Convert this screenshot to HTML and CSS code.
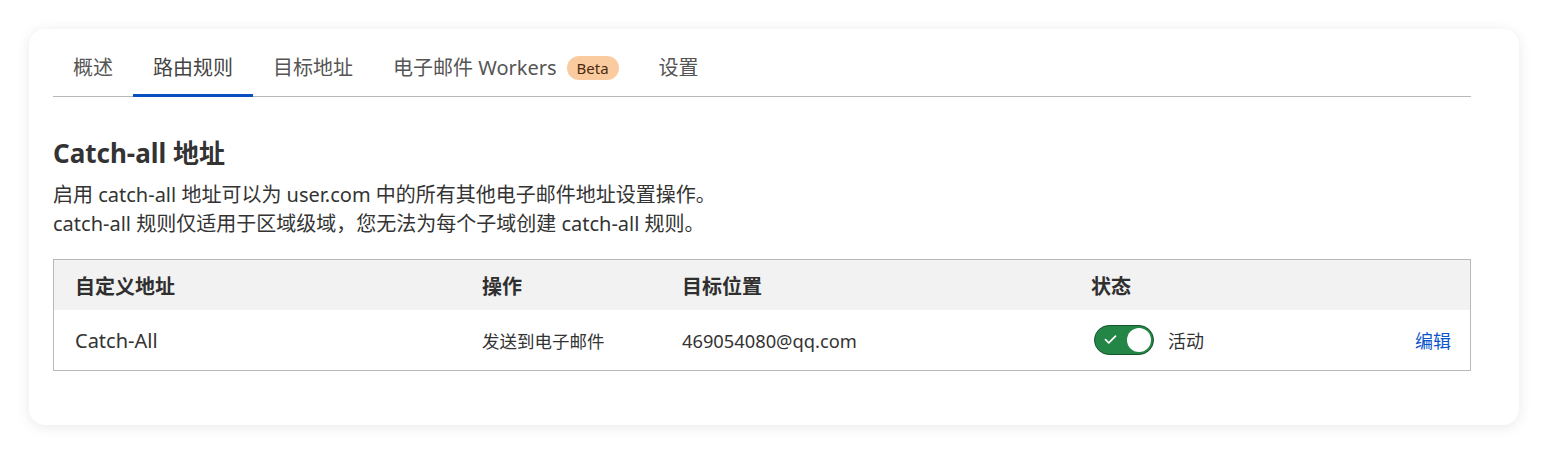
FILE: index.html
```html
<!DOCTYPE html>
<html lang="zh">
<head>
<meta charset="utf-8">
<link rel="stylesheet" href="styles.css">
</head>
<body>
<div class="card">
  <nav class="tabs">
    <div class="tab">概述</div>
    <div class="tab active">路由规则</div>
    <div class="tab">目标地址</div>
    <div class="tab">电子邮件 Workers <span class="badge">Beta</span></div>
    <div class="tab">设置</div>
  </nav>
  <h2 class="title">Catch-all 地址</h2>
  <p class="desc">启用 catch-all 地址可以为 user.com 中的所有其他电子邮件地址设置操作。<br>catch-all 规则仅适用于区域级域，您无法为每个子域创建 catch-all 规则。</p>
  <div class="table">
    <div class="row head">
      <div class="c1">自定义地址</div>
      <div class="c2">操作</div>
      <div class="c3">目标位置</div>
      <div class="c4">状态</div>
      <div class="c5"></div>
    </div>
    <div class="row body">
      <div class="c1 name">Catch-All</div>
      <div class="c2 action">发送到电子邮件</div>
      <div class="c3 email">469054080@qq.com</div>
      <div class="c4 status">
        <span class="toggle">
          <svg class="check" width="13" height="11" viewBox="0 0 13 11"><path d="M1.5 5.6 L4.8 8.8 L11.5 2.2" fill="none" stroke="#fff" stroke-width="1.7" stroke-linecap="round" stroke-linejoin="round"/></svg>
          <span class="knob"></span>
        </span>
        <span class="status-text">活动</span>
      </div>
      <div class="c5"><a class="edit">编辑</a></div>
    </div>
  </div>
</div>
</body>
</html>
```
FILE: styles.css
```css
* { box-sizing: border-box; }
html, body { margin: 0; background: #fff; }
body {
  padding: 29px;
  font-family: "Noto Sans", "Noto Sans CJK SC", sans-serif;
  color: #313131;
}
.card {
  background: #fff;
  border-radius: 16px;
  box-shadow: 0 2px 14px rgba(0,0,0,0.09);
  padding: 20px 48px 53px 24px;
  height: 396px;
}
.tabs {
  display: flex;
  border-bottom: 1px solid #b8b8b8;
}
.tab {
  display: flex;
  align-items: center;
  gap: 10px;
  padding: 6px 20px 14px;
  height: 48px;
  font-size: 20px;
  line-height: 26px;
  color: #555;
  margin-bottom: -1px;
  border-bottom: 3px solid transparent;
}
.tab.active {
  border-bottom-color: #0a4fbf;
  color: #444;
}
.badge {
  display: inline-block;
  background: #fbcba0;
  color: #4a2a10;
  font-size: 15px;
  line-height: 24px;
  height: 24px;
  padding: 0 10px;
  border-radius: 12px;
}
.title {
  margin: 39px 0 0;
  font-size: 26px;
  line-height: 34px;
  font-weight: 700;
  color: #333;
}
.desc {
  margin: 10px 0 0;
  font-size: 20px;
  line-height: 29px;
  color: #333;
}
.table {
  margin-top: 21px;
  border: 1px solid #b8b8b8;
}
.row {
  display: flex;
  align-items: center;
}
.row > div { padding-left: 21px; }
.head {
  background: #f2f2f2;
  height: 50px;
  font-weight: 700;
  font-size: 20px;
  color: #2f2f2f;
}
.body {
  height: 60px;
  font-size: 20px;
  color: #333;
}
.c1 { width: 407px; }
.c2 { width: 200px; }
.c3 { width: 409px; }
.c4 { width: 320px; }
.c5 { flex: 1; text-align: right; padding-right: 19px; }
.action { font-size: 17.5px; }
.email { font-size: 18.3px; }
.status { display: flex; align-items: center; gap: 14px; padding-left: 24px !important; }
.toggle {
  position: relative;
  width: 60px;
  height: 30px;
  border-radius: 15px;
  background: #238646;
  border: 1px solid #17552d;
  display: inline-block;
}
.check { position: absolute; left: 9px; top: 8px; }
.knob {
  position: absolute;
  right: 2px;
  top: 2px;
  width: 24px;
  height: 24px;
  border-radius: 50%;
  background: #fff;
}
.status-text { font-size: 18px; color: #333; }
.edit { color: #0a55cc; font-size: 18px; cursor: pointer; }
```
